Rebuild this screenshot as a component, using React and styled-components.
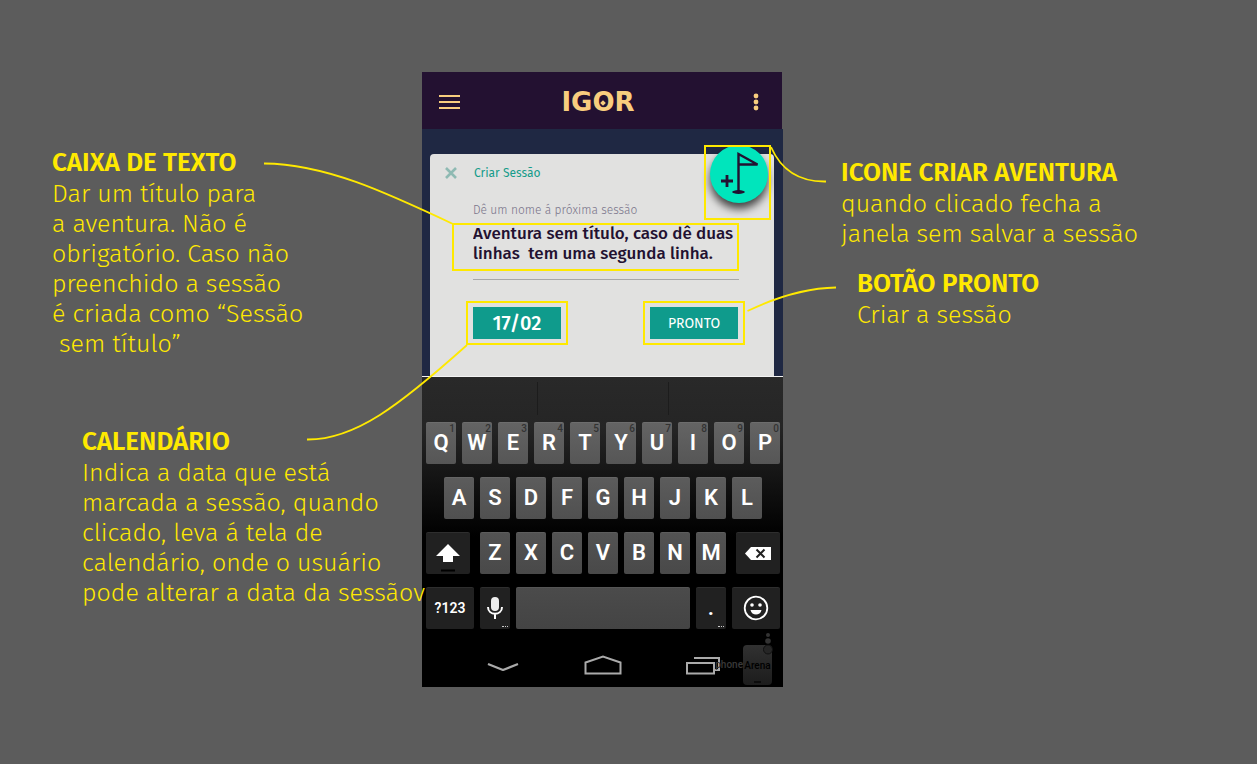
import React from "react";
import styled, { createGlobalStyle, css } from "styled-components";

const yellow = "#ffe900";
const sans = '"Fira Sans", "Noto Sans", "Open Sans", sans-serif';

const GlobalStyle = createGlobalStyle`
  * { box-sizing: border-box; }
  body { margin: 0; background: #5c5c5c; font-family: ${sans}; }
  button, textarea { font-family: inherit; border: 0; padding: 0; margin: 0; }
  button { cursor: pointer; }
`;

const Board = styled.main`
  display: grid;
  grid-template-columns: minmax(370px, 422fr) 361px minmax(320px, 474fr);
  min-height: 100vh;
  padding-top: 72px;
  align-items: start;
  overflow: hidden;
`;

const NotesLeft = styled.div`
  position: relative;
  z-index: 2;
  width: 370px;
  margin-left: auto;
  padding-top: 75px;
  display: flex;
  flex-direction: column;
  gap: 67px;
`;

const NotesRight = styled.div`
  padding: 85px 0 0 58px;
  display: flex;
  flex-direction: column;
  gap: 19px;
`;

const NoteBox = styled.section`
  margin-left: ${(p) => p.$indent || 0}px;
  color: ${yellow};
  white-space: pre;
`;

const NoteTitle = styled.h2`
  margin: 0;
  font-size: 26px;
  line-height: 32px;
  font-weight: 600;
`;

const NoteText = styled.p`
  margin: 0;
  font-size: 25px;
  line-height: 30px;
  font-weight: 300;
`;

const Phone = styled.div`
  position: relative;
  display: flex;
  flex-direction: column;
`;

const TopBar = styled.header`
  height: 57px;
  margin-right: 1px;
  padding: 2px 16px 0;
  display: flex;
  align-items: center;
  justify-content: space-between;
  background: #231131;
`;

const BarButton = styled.button`
  width: ${(p) => p.$w}px;
  height: 24px;
  display: grid;
  place-items: center;
  background: none;
`;

const Logo = styled.h1`
  margin: 0;
  color: #f8cd7e;
  font: 700 26px/28px "DejaVu Sans", sans-serif;
`;

const LogoRing = styled.span`
  position: relative;
  &::after {
    content: "";
    position: absolute;
    left: 50%;
    top: 50%;
    width: 4px;
    height: 4px;
    margin: -1px 0 0 -2px;
    background: #f8cd7e;
    transform: rotate(45deg);
  }
`;

const Stage = styled.div`
  padding: 25px 9px 0 8px;
  background: #1f2843;
  border-bottom: 1px solid #f4f4f4;
`;

const Card = styled.form`
  position: relative;
  height: 222px;
  padding: 0 35px 0 14px;
  background: #e1e1e0;
  border-radius: 4px 4px 0 0;
`;

const CardHead = styled.div`
  height: 38px;
  display: flex;
  align-items: center;
  gap: 16px;
  color: #159c8b;
  font-size: 12px;
`;

const CloseButton = styled.button`
  width: 14px;
  height: 14px;
  display: grid;
  place-items: center;
  background: none;
`;

const CardBody = styled.div`
  padding: 8px 0 0 29px;
`;

const Label = styled.label`
  display: block;
  font-size: 12px;
  line-height: 20px;
  font-weight: 300;
  color: #79748a;
`;

const marked = css`
  position: relative;
  &::after {
    content: "";
    position: absolute;
    inset: ${(p) => p.$reach};
    border: 2px solid ${yellow};
    pointer-events: none;
  }
`;

const Marked = styled.div`
  ${marked}
`;

const NameField = styled(Marked)`
  margin-top: 4px;
  padding-bottom: 14px;
  border-bottom: 1px solid #a8a8a8;
`;

const NameInput = styled.textarea`
  display: block;
  width: 100%;
  height: 41px;
  resize: none;
  overflow: hidden;
  outline: none;
  background: none;
  color: #231131;
  font-size: 17px;
  line-height: 20px;
  font-weight: 500;
  white-space: pre;
`;

const Actions = styled.div`
  margin: 27px 1px 0 0;
  display: flex;
  justify-content: space-between;
`;

const ActionButton = styled.button`
  display: block;
  width: 88px;
  height: 32px;
  background: #0f9b8c;
  color: #fff;
  font-size: ${(p) => (p.$large ? 20 : 14)}px;
  font-weight: ${(p) => (p.$large ? 500 : 400)};
`;

const FabHolder = styled(Marked)`
  position: absolute;
  top: -9px;
  right: 6px;
`;

const Fab = styled.button`
  display: block;
  width: 58px;
  height: 58px;
  border-radius: 50%;
  background: #00e5bc;
  box-shadow: 0 6px 8px rgba(0, 0, 0, 0.7);
`;

const Keyboard = styled.div`
  padding: 0 3px 0 4px;
  background: linear-gradient(#292929 0, #252525 50px, #111 110px, #000 160px);
`;

const Suggestions = styled.div`
  height: 45px;
  padding: 5px 0 7px;
  display: grid;
  grid-template-columns: 112px 131px 1fr;
`;

const Suggestion = styled.div`
  border-right: 1px solid #1c1c1c;
  &:last-child { border: 0; }
`;

const KeyRow = styled.div`
  display: flex;
  justify-content: ${(p) => (p.$spread ? "space-between" : "center")};
  gap: 6px;
  margin-bottom: 13px;
`;

const KeyGroup = styled.div`
  display: flex;
  gap: 6px;
`;

const Key = styled.button`
  position: relative;
  width: ${(p) => p.$w || 30}px;
  height: 42px;
  display: grid;
  place-items: center;
  border-radius: 2px;
  background: ${(p) => p.$tone || "linear-gradient(#646464, #565656)"};
  box-shadow: inset 0 1px rgba(255, 255, 255, 0.06);
  color: #fff;
  font: 600 ${(p) => (p.$small ? 14 : 22)}px/42px Roboto, sans-serif;
`;

const KeyHint = styled.small`
  position: absolute;
  top: 1px;
  right: 1px;
  color: #333;
  font: 500 10px/12px Roboto, sans-serif;
`;

const KeyDots = styled.span`
  position: absolute;
  right: 2px;
  bottom: 2px;
  width: 6px;
  border-bottom: 1px dotted #ccc;
`;

const NavBar = styled.nav`
  position: relative;
  height: 45px;
  padding-left: 57px;
  display: flex;
  align-items: center;
  gap: 60px;
`;

const NavButton = styled.button`
  width: 40px;
  height: 26px;
  display: grid;
  place-items: center;
  background: none;
`;

const Watermark = styled.div`
  position: absolute;
  right: 8px;
  bottom: 2px;
  display: flex;
  align-items: center;
  height: 40px;
  color: #3a3a3a;
  font: 500 10px/42px "Liberation Sans Narrow", Roboto, sans-serif;
`;

const WatermarkPhone = styled.span`
  position: relative;
  width: 29px;
  height: 40px;
  border-radius: 4px;
  background: linear-gradient(#313131, #1c1c1c);
  color: #000;
  text-align: center;
`;

const WatermarkArt = styled.svg`
  position: absolute;
  right: -1px;
  top: -14px;
`;

const Connectors = styled.svg`
  position: absolute;
  left: 0;
  top: 0;
  z-index: 3;
  overflow: visible;
  pointer-events: none;
`;

const DARK = "#212121";

const Note = ({ title, children, indent }) => (
  <NoteBox $indent={indent}>
    <NoteTitle>{title}</NoteTitle>
    <NoteText>{children}</NoteText>
  </NoteBox>
);

const letters = (text, tone) =>
  [...text].map((c) => (
    <Key type="button" key={c} $tone={tone}>
      {c}
    </Key>
  ));

export default function App() {
  return (
    <>
      <GlobalStyle />
      <Board>
        <NotesLeft>
          <Note title="CAIXA DE TEXTO">
            {"Dar um título para\na aventura. Não é\nobrigatório. Caso não\npreenchido a sessão\né criada como “Sessão\n sem título”"}
          </Note>
          <Note title="CALENDÁRIO" indent={30}>
            {"Indica a data que está\nmarcada a sessão, quando\nclicado, leva á tela de\ncalendário, onde o usuário\npode alterar a data da sessãov"}
          </Note>
        </NotesLeft>

        <Phone>
          <TopBar>
            <BarButton aria-label="Menu" $w={22}>
              <svg width="22" height="16" stroke="#f8cd7e" strokeWidth="2">
                <path d="M1 2h21M1 8h21M1 14h21" />
              </svg>
            </BarButton>
            <Logo>
              IG<LogoRing>O</LogoRing>R
            </Logo>
            <BarButton aria-label="Mais opções" $w={30}>
              <svg width="30" height="18" fill="#f8cd7e">
                <circle cx="20" cy="3" r="2.4" />
                <circle cx="20" cy="9" r="2.4" />
                <circle cx="20" cy="15" r="2.4" />
              </svg>
            </BarButton>
          </TopBar>

          <Stage>
            <Card onSubmit={(e) => e.preventDefault()}>
              <CardHead>
                <CloseButton type="button" aria-label="Fechar">
                  <svg width="12" height="12" stroke="#8fbab3" strokeWidth="2.6">
                    <path d="M1 1l10 10M11 1L1 11" />
                  </svg>
                </CloseButton>
                Criar Sessão
              </CardHead>
              <CardBody>
                <Label htmlFor="nome">Dê um nome á próxima sessão</Label>
                <NameField $reach="-1px 0 8px -21px">
                  <NameInput
                    id="nome"
                    spellCheck="false"
                    defaultValue={"Aventura sem título, caso dê duas\nlinhas  tem uma segunda linha."}
                  />
                </NameField>
                <Actions>
                  <Marked $reach="-6px -7px">
                    <ActionButton type="button" $large>17/02</ActionButton>
                  </Marked>
                  <Marked $reach="-6px -7px">
                    <ActionButton type="submit">PRONTO</ActionButton>
                  </Marked>
                </Actions>
              </CardBody>
              <FabHolder $reach="0 -3px -17px -6px">
                <Fab type="button" aria-label="Criar aventura">
                  <svg width="58" height="58" fill="none" stroke="#231131">
                    <path d="M28.500 47V9L47.500 19.500H28.500" strokeWidth="2.400" />
                    <path d="M11 36h12M17 30v12" strokeWidth="2.800" />
                    <ellipse cx="28.500" cy="47" rx="6.300" ry="1.900" fill="#231131" stroke="none" />
                  </svg>
                </Fab>
              </FabHolder>
            </Card>
          </Stage>

          <Keyboard>
            <Suggestions>
              <Suggestion />
              <Suggestion />
              <Suggestion />
            </Suggestions>
            <KeyRow>
              {[..."QWERTYUIOP"].map((c, i) => (
                <Key type="button" key={c}>
                  {c}
                  <KeyHint>{(i + 1) % 10}</KeyHint>
                </Key>
              ))}
            </KeyRow>
            <KeyRow>{letters("ASDFGHJKL", "linear-gradient(#5c5c5c, #505050)")}</KeyRow>
            <KeyRow $spread>
              <Key type="button" aria-label="Shift" $w={44} $tone={DARK}>
                <svg width="44" height="42">
                  <path d="M22 12L34 24h-7v6H17v-6h-7z" fill="#fff" />
                  <path d="M15 38.500h14" stroke="#000" strokeWidth="2" />
                </svg>
              </Key>
              <KeyGroup>{letters("ZXCVBNM", "linear-gradient(#535353, #494949)")}</KeyGroup>
              <Key type="button" aria-label="Apagar" $w={44} $tone={DARK}>
                <svg width="44" height="42">
                  <path d="M9 21.500L15 15H35v13H15z" fill="#fff" />
                  <path d="M20.500 17.500l8 8M28.500 17.500l-8 8" stroke="#212121" strokeWidth="2" />
                </svg>
              </Key>
            </KeyRow>
            <KeyRow>
              <Key type="button" $w={48} $tone={DARK} $small>?123</Key>
              <Key type="button" aria-label="Ditado" $tone={DARK}>
                <svg width="30" height="42" fill="none" stroke="#fff">
                  <rect x="11" y="10" width="8" height="14" rx="4" fill="#eee" stroke="none" />
                  <path d="M8 20c0 9 14 9 14 0M15 26v6" strokeWidth="2" />
                </svg>
                <KeyDots />
              </Key>
              <Key type="button" aria-label="Espaço" $w={174} $tone="linear-gradient(#4b4b4b, #444)" />
              <Key type="button" $tone={DARK}>
                .
                <KeyDots />
              </Key>
              <Key type="button" aria-label="Emoji" $w={48} $tone={DARK}>
                <svg width="26" height="26" fill="none" stroke="#fff" strokeWidth="1.800">
                  <circle cx="13" cy="13" r="11.300" />
                  <path d="M7.500 15h11c-1 6-10 6-11 0z" fill="#fff" stroke="none" />
                  <circle cx="9" cy="10" r="1.800" fill="#fff" stroke="none" />
                  <circle cx="17" cy="10" r="1.800" fill="#fff" stroke="none" />
                </svg>
              </Key>
            </KeyRow>
            <NavBar>
              <NavButton aria-label="Voltar">
                <svg width="32" height="12" fill="none" stroke="#aaa" strokeWidth="2.200">
                  <path d="M1 5l15 6 15-6" />
                </svg>
              </NavButton>
              <NavButton aria-label="Início">
                <svg width="38" height="22" fill="none" stroke="#aaa" strokeWidth="2">
                  <path d="M1.500 19.500V8.500L19 2.500l17.500 6v11z" />
                </svg>
              </NavButton>
              <NavButton aria-label="Recentes">
                <svg width="38" height="22" fill="none" stroke="#aaa" strokeWidth="2">
                  <path d="M3 9h27v10.500H3zM10 4h25v12h-5" />
                </svg>
              </NavButton>
              <Watermark>
                phone
                <WatermarkPhone>
                  Arena
                  <WatermarkArt width="30" height="54" fill="#333">
                    <circle cx="25" cy="4" r="2" />
                    <circle cx="25" cy="10" r="2.800" />
                    <circle cx="25" cy="18.500" r="4.500" fill="#262626" stroke="#111" />
                    <path d="M11 51h7" stroke="#0c0c0c" strokeWidth="2" />
                  </WatermarkArt>
                </WatermarkPhone>
              </Watermark>
            </NavBar>
          </Keyboard>

          <Connectors
            width="361"
            height="615"
            viewBox="422 72 361 615"
            fill="none"
            stroke={yellow}
            strokeWidth="1.800"
            aria-hidden="true"
          >
            <path d="M264 163.500C325 164 385 192 453 224" />
            <path d="M307 439.500C355 440 400 405 467 345" />
            <path d="M771 147C782 172 801 182 826 181.500" />
            <path d="M747.500 311C785 293 812 288 836 287.500" />
          </Connectors>
        </Phone>

        <NotesRight>
          <Note title="ICONE CRIAR AVENTURA">{"quando clicado fecha a\njanela sem salvar a sessão"}</Note>
          <Note title="BOTÃO PRONTO" indent={16}>Criar a sessão</Note>
        </NotesRight>
      </Board>
    </>
  );
}
